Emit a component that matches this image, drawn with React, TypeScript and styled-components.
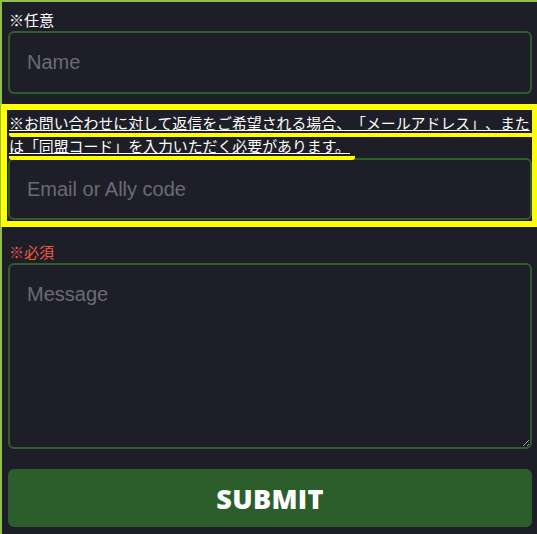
import React from "react";
import styled, { createGlobalStyle } from "styled-components";

const GlobalStyle = createGlobalStyle`
  html, body {
    margin: 0;
    padding: 0;
    background: #1e1e28;
  }
  body {
    font-family: "Liberation Sans", "Noto Sans CJK JP", sans-serif;
  }
  * { box-sizing: border-box; }
`;

const Page = styled.div`
  min-height: 534px;
  background: #1e1e28;
  border-top: 2px solid #8fbf4f;
  border-left: 2px solid #8fbf4f;
  padding: 7px 5px 0 6px;
  display: flex;
  flex-direction: column;
`;

const Group = styled.div<{ $gap: number }>`
  display: flex;
  flex-direction: column;
  margin-bottom: ${(p) => p.$gap}px;
`;

const HighlightGroup = styled(Group)`
  position: relative;
  &::after {
    content: "";
    position: absolute;
    left: -7px;
    right: -6px;
    top: -8px;
    bottom: -7px;
    border: 6px solid #ffff00;
    pointer-events: none;
  }
`;

const Label = styled.div<{ $required?: boolean }>`
  font-family: "Noto Sans CJK JP", sans-serif;
  font-size: 15px;
  line-height: 22px;
  color: ${(p) => (p.$required ? "#f2583b" : "#ffffff")};
  padding-left: 1px;
`;

const Notice = styled.div`
  font-family: "Noto Sans CJK JP", sans-serif;
  font-size: 14.9px;
  line-height: 23px;
  color: #ffffff;
  padding-left: 1px;
  margin-top: -1px;
  margin-bottom: 1px;
  text-spacing-trim: space-all;
`;

const Marked = styled.span`
  position: relative;
  z-index: 1;
  text-decoration: underline;
  text-decoration-color: #ffffff;
  text-decoration-thickness: 1px;
  text-underline-offset: 1px;
  background-image: linear-gradient(#ffff00, #ffff00);
  background-repeat: no-repeat;
  background-position: 0 100%;
  background-size: 100% 4px;
  -webkit-box-decoration-break: clone;
  box-decoration-break: clone;
  padding-right: 5px;
  padding-bottom: 4px;
  border-radius: 3px;
`;

const fieldBase = `
  width: 100%;
  background: #1e1e28;
  border: 2px solid #2f5e2a;
  border-radius: 6px;
  color: #ffffff;
  font-family: "Liberation Sans", Arial, sans-serif;
  font-size: 20px;
  outline: none;
  &::placeholder {
    color: #6b6b73;
  }
`;

const Input = styled.input<{ $h: number }>`
  ${fieldBase}
  height: ${(p) => p.$h}px;
  padding: 0 17px;
`;

const TextArea = styled.textarea`
  ${fieldBase}
  height: 186px;
  padding: 18px 17px;
  line-height: 23px;
  resize: vertical;
  display: block;
`;

const Submit = styled.button`
  width: 100%;
  height: 58px;
  border: none;
  border-radius: 6px;
  background: #2b5e2a;
  color: #ffffff;
  font-family: "Open Sans", sans-serif;
  font-weight: 800;
  font-size: 27px;
  letter-spacing: 0.3px;
  cursor: pointer;
`;

export default function App() {
  return (
    <>
      <GlobalStyle />
      <Page>
        <Group $gap={18}>
          <Label>※任意</Label>
          <Input $h={63} placeholder="Name" />
        </Group>
        <HighlightGroup $gap={21}>
          <Notice>
            <Marked>
              ※お問い合わせに対して返信をご希望される場合、「メールアドレス」、または「同盟コード」を入力いただく必要があります。
            </Marked>
          </Notice>
          <Input $h={62} placeholder="Email or Ally code" />
        </HighlightGroup>
        <Group $gap={20}>
          <Label $required>※必須</Label>
          <TextArea placeholder="Message" />
        </Group>
        <Submit type="button">SUBMIT</Submit>
      </Page>
    </>
  );
}
